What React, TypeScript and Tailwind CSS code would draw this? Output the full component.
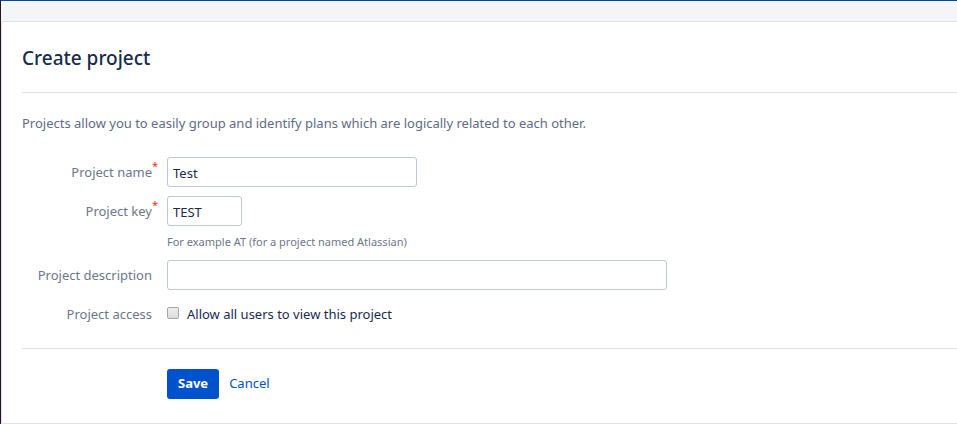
import { useState } from "react";
import type { ReactNode } from "react";

function Field({ label, id, required, children }: { label: string; id: string; required?: boolean; children: ReactNode }) {
  return (
    <div className="flex items-start">
      <label htmlFor={id} className="relative mr-[15px] w-[130px] shrink-0 py-[5px] text-right leading-5 text-[#6b778c]">
        {label}
        {required && <span className="absolute left-full top-0 text-[11px] leading-[18px] text-[#de350b]">*</span>}
      </label>
      <div className="min-w-0">{children}</div>
    </div>
  );
}

const input = "block h-[30px] max-w-full rounded-[3px] border border-[#c1c7d0] bg-white px-[5px] pt-px text-[#172b4d] outline-none";

export default function App() {
  const [name, setName] = useState("Test");
  const [key, setKey] = useState("TEST");
  const [description, setDescription] = useState("");
  return (
    <div className="border-l border-t border-l-[#25151f] border-t-[#0747a6] bg-[#f4f5f7] pt-5 font-['Noto_Sans',sans-serif] text-[13px] text-[#172b4d]">
      <main className="rounded-l-[3px] border-y border-l border-[#dfe1e6] bg-white pb-6 pl-5">
        <h1 className="pt-6 text-[19px] font-medium leading-6">Create project</h1>
        <form onSubmit={(e) => e.preventDefault()}>
          <p className="mt-[22px] border-t border-[#dfe1e6] pt-5 leading-5 text-[#5e6c84]">
            Projects allow you to easily group and identify plans which are logically related to each other.
          </p>
          <div className="mt-6 flex flex-col gap-[9px]">
            <Field label="Project name" id="name" required>
              <input id="name" className={`${input} w-[250px]`} value={name} onChange={(e) => setName(e.target.value)} />
            </Field>
            <Field label="Project key" id="key" required>
              <input id="key" className={`${input} w-[75px]`} value={key} onChange={(e) => setKey(e.target.value)} />
              <p className="pt-[7px] text-[11px] leading-[18px] text-[#6b778c]">For example AT (for a project named Atlassian)</p>
            </Field>
            <Field label="Project description" id="description">
              <input id="description" className={`${input} w-[500px]`} value={description} onChange={(e) => setDescription(e.target.value)} />
            </Field>
            <Field label="Project access" id="access">
              <div className="flex items-center py-[5px]">
                <input id="access" type="checkbox" className="mb-[2px] h-3 w-3 appearance-none rounded-[2px] border border-[#a6a6a6] bg-linear-to-b from-[#eeeeee] to-[#dcdcdc] checked:bg-[#0052cc]" />
                <label htmlFor="access" className="ml-2 leading-5">Allow all users to view this project</label>
              </div>
            </Field>
          </div>
          <div className="mt-[19px] flex items-center border-t border-[#dfe1e6] pl-[145px] pt-5">
            <button type="submit" className="h-[30px] rounded-[3px] bg-[#0052cc] px-[11px] font-bold text-white">Save</button>
            <a href="#" className="ml-[10px] text-[#0052cc]">Cancel</a>
          </div>
        </form>
      </main>
    </div>
  );
}
